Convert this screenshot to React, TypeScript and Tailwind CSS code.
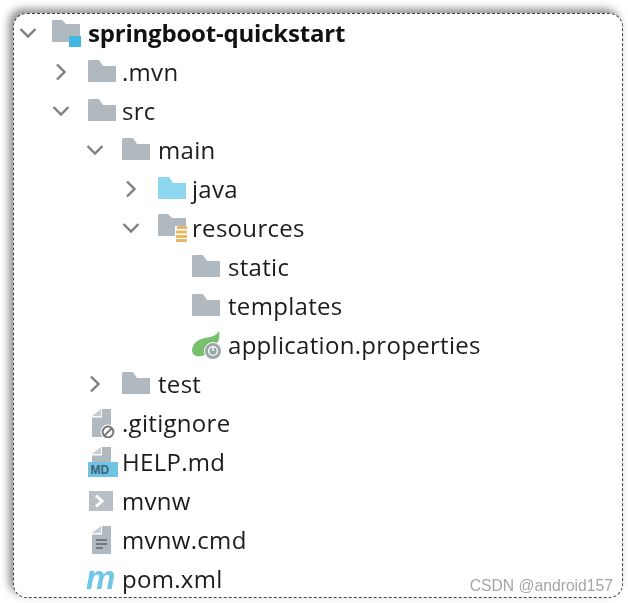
import React from "react";

const Folder = ({ fill = "#afb9bf" }: { fill?: string }) => (
	<svg className="mb-[2px]" width="28" height="24" viewBox="0 0 28 24">
		<path d="M0 2 L0 23 L28 23 L28 7 L15 7 L11 1 L1 1 Z" fill={fill} />
	</svg>
);

const ChevronDown = () => (
	<svg width="18" height="12" viewBox="0 0 18 12" fill="none" stroke="#7f7f7f" strokeWidth="2.4">
		<path d="M1.5 2 L9 9.5 L16.5 2" />
	</svg>
);

const ChevronRight = () => (
	<svg width="12" height="18" viewBox="0 0 12 18" fill="none" stroke="#7f7f7f" strokeWidth="2.4">
		<path d="M2 1.5 L9.5 9 L2 16.5" />
	</svg>
);

const ModuleIcon = () => (
	<svg className="mt-[3px]" width="30" height="28" viewBox="0 0 30 28">
		<path d="M0 1 L0 22 L17 22 L17 16 L28 16 L28 4 L14 4 L10 0 L1 0 Z" fill="#afb9bf" />
		<rect x="17" y="16" width="12" height="11" fill="#40b6e0" />
	</svg>
);

const ResourcesIcon = () => (
	<svg width="30" height="28" viewBox="0 0 30 28">
		<path d="M0 1 L0 22 L17 22 L17 12 L28 12 L28 4 L14 4 L10 0 L1 0 Z" fill="#afb9bf" />
		<g fill="#e8b866">
			<rect x="19" y="12" width="10" height="3" />
			<rect x="18" y="16.5" width="11" height="3" />
			<rect x="18" y="21" width="11" height="3" />
			<rect x="18" y="25" width="11" height="3" />
		</g>
	</svg>
);

const SpringIcon = () => (
	<svg width="30" height="28" viewBox="0 0 30 28">
		<path d="M0 19 C1 11 7 8 13 7 C19 6 24 5 27 0 C28 6 27 10 25 12 L14 23 C8 27 0 26 0 19 Z" fill="#78c06e" />
		<circle cx="21" cy="20" r="9" fill="#fff" />
		<circle cx="21" cy="20" r="8" fill="#9aa5ac" />
		<circle cx="21" cy="20" r="4.4" fill="none" stroke="#fff" strokeWidth="1.4" />
		<path d="M21 15.5 V20" stroke="#fff" strokeWidth="1.4" />
	</svg>
);

const FileBody = () => (
	<>
		<path d="M10 0 H19 V28 H0 V8.5 H10 Z" fill="#afb9bf" />
		<path d="M0 7 L9 0 V7 Z" fill="#c5cdd2" />
	</>
);

const GitIgnoreIcon = () => (
	<svg className="ml-1" width="24" height="29" viewBox="0 0 24 29">
		<FileBody />
		<circle cx="16" cy="23" r="7.5" fill="#fff" />
		<circle cx="16" cy="23" r="5.4" fill="none" stroke="#777" strokeWidth="2" />
		<path d="M12.5 26.5 L19.5 19.5" stroke="#777" strokeWidth="2" />
	</svg>
);

const MdIcon = () => (
	<svg width="30" height="30" viewBox="0 0 30 30">
		<path d="M14 0 H23 V15 H4 V8.5 H14 Z" fill="#afb9bf" />
		<path d="M4 7 L13 0 V7 Z" fill="#c5cdd2" />
		<rect x="0" y="15" width="30" height="15" fill="#6fc3e3" />
		<text x="2.5" y="27" fontSize="12" fontWeight="700" fontFamily="'Liberation Sans', sans-serif" fill="#3f6478">
			MD
		</text>
	</svg>
);

const TerminalIcon = () => (
	<svg className="ml-px" width="24" height="20" viewBox="0 0 24 20">
		<rect width="24" height="20" fill="#b6c0c6" />
		<path d="M7 4.5 L13 10 L7 15.5" fill="none" stroke="#fff" strokeWidth="3" />
	</svg>
);

const CmdIcon = () => (
	<svg className="ml-1" width="20" height="28" viewBox="0 0 20 28">
		<FileBody />
		<path d="M4 14 H15 M4 18 H15 M4 22 H11" stroke="#5f6367" strokeWidth="1.6" />
	</svg>
);

const MavenIcon = () => (
	<span className="-ml-[2px] mb-[3px] text-[33px] leading-none font-bold italic text-[#6fc6e8] [font-family:'Liberation_Sans',sans-serif]">m</span>
);

type RowProps = {
	pad: string;
	chevron?: "down" | "right";
	icon: React.ReactNode;
	label: string;
	bold?: boolean;
	wide?: boolean;
};

const Row = ({ pad, chevron, icon, label, bold, wide }: RowProps) => (
	<div className={`flex h-[39.07px] items-center ${pad}`}>
		<div className="flex w-[28px] shrink-0 items-center justify-center">
			{chevron === "down" && <ChevronDown />}
			{chevron === "right" && <ChevronRight />}
		</div>
		<div className={`flex shrink-0 items-center ${bold ? "ml-[10px]" : "ml-[13px]"} ${bold || wide ? "w-[36px]" : "w-[34px]"}`}>{icon}</div>
		<span className={bold ? "font-bold tracking-[-0.2px] text-[#111]" : "tracking-[0.3px] text-[#1c1c1c]"}>{label}</span>
	</div>
);

export default function App() {
	return (
		<div className="h-[603px] w-[628px] bg-white pt-[13px] pr-[5px] pb-[5px] pl-[13px] text-[24px] [font-family:'Open_Sans',sans-serif]">
			<div className="relative h-full rounded-[14px] border border-dashed border-[#444] bg-white shadow-[-4px_-4px_8px_rgba(0,0,0,0.45)]">
				<div className="-mt-px flex flex-col blur-[0.4px]">
					<Row pad="pl-0" chevron="down" icon={<ModuleIcon />} label="springboot-quickstart" bold />
					<Row pad="pl-[33px]" chevron="right" icon={<Folder />} label=".mvn" />
					<Row pad="pl-[33px]" chevron="down" icon={<Folder />} label="src" />
					<Row pad="pl-[67px]" chevron="down" icon={<Folder />} label="main" wide />
					<Row pad="pl-[103px]" chevron="right" icon={<Folder fill="#8dd6ef" />} label="java" />
					<Row pad="pl-[103px]" chevron="down" icon={<ResourcesIcon />} label="resources" />
					<Row pad="pl-[137px]" icon={<Folder />} label="static" wide />
					<Row pad="pl-[137px]" icon={<Folder />} label="templates" wide />
					<Row pad="pl-[137px]" icon={<SpringIcon />} label="application.properties" wide />
					<Row pad="pl-[67px]" chevron="right" icon={<Folder />} label="test" wide />
					<Row pad="pl-[33px]" icon={<GitIgnoreIcon />} label=".gitignore" />
					<Row pad="pl-[33px]" icon={<MdIcon />} label="HELP.md" />
					<Row pad="pl-[33px]" icon={<TerminalIcon />} label="mvnw" />
					<Row pad="pl-[33px]" icon={<CmdIcon />} label="mvnw.cmd" />
					<Row pad="pl-[33px]" icon={<MavenIcon />} label="pom.xml" />
				</div>
				<span className="absolute right-[9px] bottom-[1px] text-[15.7px] leading-5 text-[#a6a6a6] [font-family:'Liberation_Sans',sans-serif]">
					CSDN @android157
				</span>
			</div>
		</div>
	);
}
